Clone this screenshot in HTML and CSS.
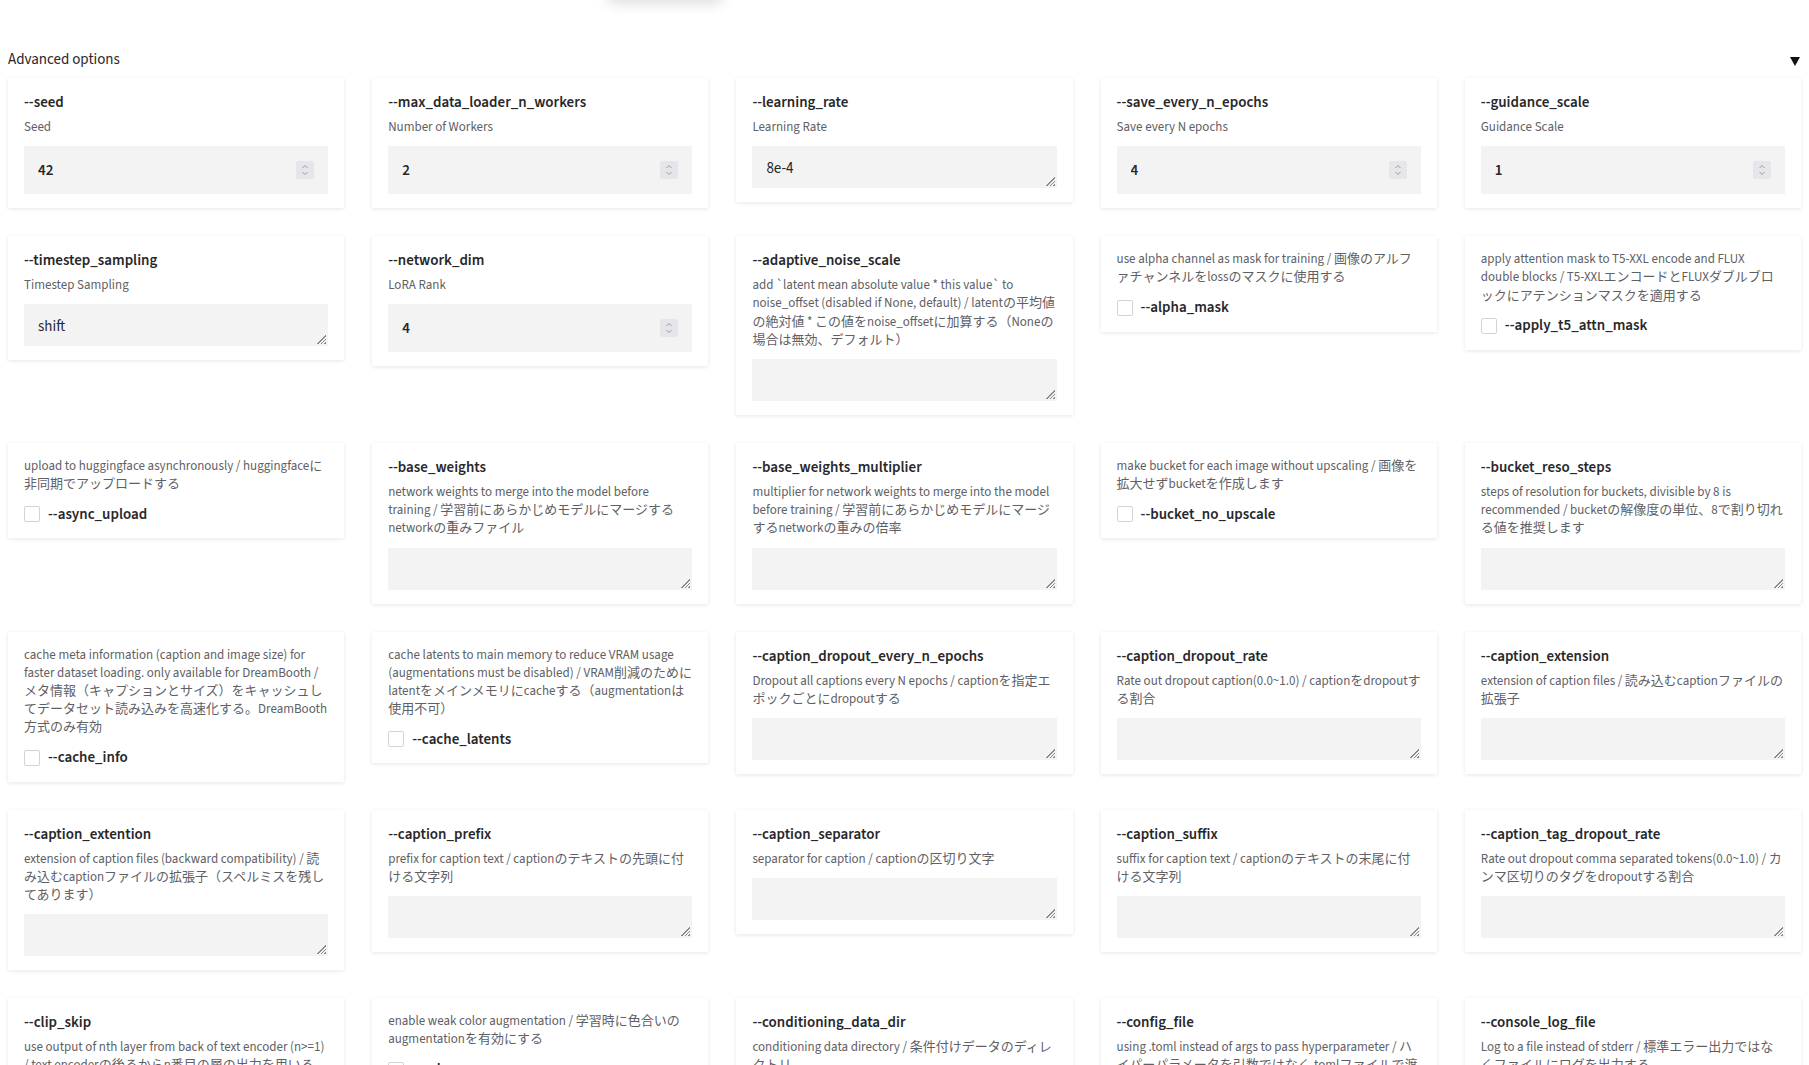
FILE: index.html
```html
<!DOCTYPE html>
<html lang="en">
<head>
    <meta charset="UTF-8">
    <meta name="viewport" content="width=device-width, initial-scale=1.0">
    <title>Advanced options</title>
    <link rel="stylesheet" href="styles.css">
</head>
<body>
    <div class="top-strip"><div class="floating-button"></div></div>

    <div class="accordion">
        <div class="accordion-header">
            <span>Advanced options</span>
            <svg class="caret" width="10" height="9" viewBox="0 0 10 9"><path d="M0 0H10L5 9Z" fill="#111"/></svg>
        </div>

        <div class="options-grid">
            <!-- row 1 -->
            <div class="card">
                <div class="title">--seed</div>
                <div class="info">Seed</div>
                <div class="number-field"><input type="number" value="42"><span class="spin"><svg width="18" height="18" viewBox="0 0 18 18"><path d="M6.5 7 9 4.5 11.5 7M6.5 11 9 13.5 11.5 11" fill="none" stroke="#9a9aa2" stroke-width="1"/></svg></span></div>
            </div>
            <div class="card">
                <div class="title">--max_data_loader_n_workers</div>
                <div class="info">Number of Workers</div>
                <div class="number-field"><input type="number" value="2"><span class="spin"><svg width="18" height="18" viewBox="0 0 18 18"><path d="M6.5 7 9 4.5 11.5 7M6.5 11 9 13.5 11.5 11" fill="none" stroke="#9a9aa2" stroke-width="1"/></svg></span></div>
            </div>
            <div class="card">
                <div class="title">--learning_rate</div>
                <div class="info">Learning Rate</div>
                <textarea rows="1">8e-4</textarea>
            </div>
            <div class="card">
                <div class="title">--save_every_n_epochs</div>
                <div class="info">Save every N epochs</div>
                <div class="number-field"><input type="number" value="4"><span class="spin"><svg width="18" height="18" viewBox="0 0 18 18"><path d="M6.5 7 9 4.5 11.5 7M6.5 11 9 13.5 11.5 11" fill="none" stroke="#9a9aa2" stroke-width="1"/></svg></span></div>
            </div>
            <div class="card">
                <div class="title">--guidance_scale</div>
                <div class="info">Guidance Scale</div>
                <div class="number-field"><input type="number" value="1"><span class="spin"><svg width="18" height="18" viewBox="0 0 18 18"><path d="M6.5 7 9 4.5 11.5 7M6.5 11 9 13.5 11.5 11" fill="none" stroke="#9a9aa2" stroke-width="1"/></svg></span></div>
            </div>

            <!-- row 2 -->
            <div class="card">
                <div class="title">--timestep_sampling</div>
                <div class="info">Timestep Sampling</div>
                <textarea rows="1">shift</textarea>
            </div>
            <div class="card">
                <div class="title">--network_dim</div>
                <div class="info">LoRA Rank</div>
                <div class="number-field"><input type="number" value="4"><span class="spin"><svg width="18" height="18" viewBox="0 0 18 18"><path d="M6.5 7 9 4.5 11.5 7M6.5 11 9 13.5 11.5 11" fill="none" stroke="#9a9aa2" stroke-width="1"/></svg></span></div>
            </div>
            <div class="card">
                <div class="title">--adaptive_noise_scale</div>
                <div class="info">add `latent mean absolute value * this value` to noise_offset (disabled if None, default) / latentの平均値の絶対値 * この値をnoise_offsetに加算する（Noneの場合は無効、デフォルト）</div>
                <textarea rows="1"></textarea>
            </div>
            <div class="card">
                <div class="info">use alpha channel as mask for training / 画像のアルファチャンネルをlossのマスクに使用する</div>
                <label class="check"><input type="checkbox"><span>--alpha_mask</span></label>
            </div>
            <div class="card">
                <div class="info">apply attention mask to T5-XXL encode and FLUX double blocks / T5-XXLエンコードとFLUXダブルブロックにアテンションマスクを適用する</div>
                <label class="check"><input type="checkbox"><span>--apply_t5_attn_mask</span></label>
            </div>

            <!-- row 3 -->
            <div class="card">
                <div class="info">upload to huggingface asynchronously / huggingfaceに非同期でアップロードする</div>
                <label class="check"><input type="checkbox"><span>--async_upload</span></label>
            </div>
            <div class="card">
                <div class="title">--base_weights</div>
                <div class="info">network weights to merge into the model before training / 学習前にあらかじめモデルにマージするnetworkの重みファイル</div>
                <textarea rows="1"></textarea>
            </div>
            <div class="card">
                <div class="title">--base_weights_multiplier</div>
                <div class="info">multiplier for network weights to merge into the model before training / 学習前にあらかじめモデルにマージするnetworkの重みの倍率</div>
                <textarea rows="1"></textarea>
            </div>
            <div class="card">
                <div class="info">make bucket for each image without upscaling / 画像を拡大せずbucketを作成します</div>
                <label class="check"><input type="checkbox"><span>--bucket_no_upscale</span></label>
            </div>
            <div class="card">
                <div class="title">--bucket_reso_steps</div>
                <div class="info">steps of resolution for buckets, divisible by 8 is recommended / bucketの解像度の単位、8で割り切れる値を推奨します</div>
                <textarea rows="1"></textarea>
            </div>

            <!-- row 4 -->
            <div class="card">
                <div class="info">cache meta information (caption and image size) for faster dataset loading. only available for DreamBooth / メタ情報（キャプションとサイズ）をキャッシュしてデータセット読み込みを高速化する。DreamBooth方式のみ有効</div>
                <label class="check"><input type="checkbox"><span>--cache_info</span></label>
            </div>
            <div class="card">
                <div class="info">cache latents to main memory to reduce VRAM usage (augmentations must be disabled) / VRAM削減のためにlatentをメインメモリにcacheする（augmentationは使用不可）</div>
                <label class="check"><input type="checkbox"><span>--cache_latents</span></label>
            </div>
            <div class="card">
                <div class="title">--caption_dropout_every_n_epochs</div>
                <div class="info">Dropout all captions every N epochs / captionを指定エポックごとにdropoutする</div>
                <textarea rows="1"></textarea>
            </div>
            <div class="card">
                <div class="title">--caption_dropout_rate</div>
                <div class="info">Rate out dropout caption(0.0~1.0) / captionをdropoutする割合</div>
                <textarea rows="1"></textarea>
            </div>
            <div class="card">
                <div class="title">--caption_extension</div>
                <div class="info">extension of caption files / 読み込むcaptionファイルの拡張子</div>
                <textarea rows="1"></textarea>
            </div>

            <!-- row 5 -->
            <div class="card">
                <div class="title">--caption_extention</div>
                <div class="info">extension of caption files (backward compatibility) / 読み込むcaptionファイルの拡張子（スペルミスを残してあります）</div>
                <textarea rows="1"></textarea>
            </div>
            <div class="card">
                <div class="title">--caption_prefix</div>
                <div class="info">prefix for caption text / captionのテキストの先頭に付ける文字列</div>
                <textarea rows="1"></textarea>
            </div>
            <div class="card">
                <div class="title">--caption_separator</div>
                <div class="info">separator for caption / captionの区切り文字</div>
                <textarea rows="1"></textarea>
            </div>
            <div class="card">
                <div class="title">--caption_suffix</div>
                <div class="info">suffix for caption text / captionのテキストの末尾に付ける文字列</div>
                <textarea rows="1"></textarea>
            </div>
            <div class="card">
                <div class="title">--caption_tag_dropout_rate</div>
                <div class="info">Rate out dropout comma separated tokens(0.0~1.0) / カンマ区切りのタグをdropoutする割合</div>
                <textarea rows="1"></textarea>
            </div>

            <!-- row 6 -->
            <div class="card">
                <div class="title">--clip_skip</div>
                <div class="info">use output of nth layer from back of text encoder (n&gt;=1) / text encoderの後ろからn番目の層の出力を用いる（nは1以上）</div>
                <div class="number-field"><input type="number" value=""><span class="spin"><svg width="18" height="18" viewBox="0 0 18 18"><path d="M6.5 7 9 4.5 11.5 7M6.5 11 9 13.5 11.5 11" fill="none" stroke="#9a9aa2" stroke-width="1"/></svg></span></div>
            </div>
            <div class="card">
                <div class="info">enable weak color augmentation / 学習時に色合いのaugmentationを有効にする</div>
                <label class="check"><input type="checkbox"><span>--color_aug</span></label>
            </div>
            <div class="card">
                <div class="title">--conditioning_data_dir</div>
                <div class="info">conditioning data directory / 条件付けデータのディレクトリ</div>
                <textarea rows="1"></textarea>
            </div>
            <div class="card">
                <div class="title">--config_file</div>
                <div class="info">using .toml instead of args to pass hyperparameter / ハイパーパラメータを引数ではなく.tomlファイルで渡す</div>
                <textarea rows="1"></textarea>
            </div>
            <div class="card">
                <div class="title">--console_log_file</div>
                <div class="info">Log to a file instead of stderr / 標準エラー出力ではなくファイルにログを出力する</div>
                <textarea rows="1"></textarea>
            </div>
        </div>
    </div>
</body>
</html>
```

FILE: styles.css
```css
body {
    font-family: "Source Sans 3", "Noto Sans CJK JP", sans-serif;
    margin: 0;
    padding: 0 8px;
    background-color: white;
    color: #27272a;
}

.top-strip {
    display: flow-root;
    height: 0;
}

.floating-button {
    width: 116px;
    height: 20px;
    margin-top: -20px;
    margin-left: 599px;
    border-radius: 8px;
    background-color: white;
    box-shadow: 0 4px 14px rgba(0, 0, 0, 0.13);
}

.accordion-header {
    display: flex;
    justify-content: space-between;
    align-items: center;
    padding-top: 50px;
    height: 20px;
    margin-bottom: 8px;
    font-size: 15px;
    line-height: 20px;
    color: #27272a;
}

.caret {
    margin-right: 1px;
    margin-top: 2px;
}

.options-grid {
    display: grid;
    grid-template-columns: repeat(5, 1fr);
    gap: 28px;
    align-items: start;
}

.card {
    background-color: white;
    padding: 14px 16px;
    box-shadow: 0 1px 4px rgba(0, 0, 0, 0.1);
}

.title {
    font-size: 15px;
    font-weight: 600;
    line-height: 22px;
    margin-bottom: 4px;
    color: #27272a;
}

.info {
    font-size: 13px;
    line-height: 18.2px;
    color: #5f5f66;
}

.number-field {
    display: flex;
    align-items: center;
    height: 48px;
    margin-top: 10px;
    padding: 0 14px;
    background-color: #f3f3f4;
}

.number-field input {
    flex: 1;
    min-width: 0;
    border: none;
    background: transparent;
    font-family: inherit;
    font-size: 15px;
    font-weight: 600;
    color: #27272a;
    padding: 0;
    outline: none;
    -moz-appearance: textfield;
}

.number-field input::-webkit-inner-spin-button,
.number-field input::-webkit-outer-spin-button {
    -webkit-appearance: none;
    margin: 0;
}

.spin {
    display: flex;
    width: 18px;
    height: 18px;
    background-color: #e6e6ea;
    border-radius: 2px;
}

textarea {
    display: block;
    box-sizing: border-box;
    width: 100%;
    height: 42px;
    margin-top: 10px;
    padding: 13px 14px 10px;
    border: none;
    border-radius: 0;
    resize: none;
    outline: none;
    overflow: hidden;
    font-family: inherit;
    font-size: 15px;
    line-height: 19px;
    color: #27272a;
    background:
        linear-gradient(135deg, #f3f3f4 50%, transparent 50%) right 2px bottom 2px / 10px 10px no-repeat,
        repeating-linear-gradient(135deg, #8a8a8a 0 1px, transparent 1px 2.5px) right 2px bottom 2px / 10px 10px no-repeat,
        #f3f3f4;
}

.check {
    display: flex;
    align-items: center;
    gap: 8px;
    height: 20px;
    margin-top: 11px;
    font-size: 15px;
    font-weight: 600;
    color: #27272a;
}

.check input {
    -webkit-appearance: none;
    appearance: none;
    width: 16px;
    height: 16px;
    margin: 0;
    border: 1px solid #d4d4d8;
    border-radius: 2px;
    background-color: white;
}
```
